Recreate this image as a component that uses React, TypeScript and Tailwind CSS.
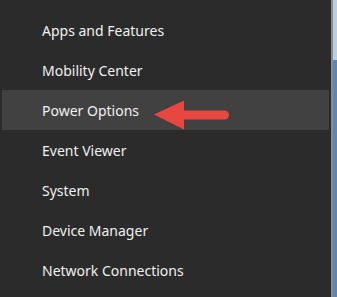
const items = [
  'Apps and Features',
  'Mobility Center',
  'Power Options',
  'Event Viewer',
  'System',
  'Device Manager',
  'Network Connections',
]

function Arrow() {
  return (
    <svg width="76" height="30" viewBox="0 0 76 30" className="absolute left-[152px] top-[10px]">
      <path d="M0 14.5 L30 0.5 L30 10.5 L70.5 10.5 A4.5 4.5 0 0 1 70.5 19.5 L30 19.5 L30 29.5 Z" fill="#e8473f" />
    </svg>
  )
}

export default function App() {
  return (
    <div className="flex w-[337px] h-[297px] bg-[#2b2b2b] overflow-hidden" style={{ fontFamily: '"Noto Sans", "Open Sans", sans-serif' }}>
      <div className="w-[331px] pt-[10px] pl-[2px] pr-[2px]">
        {items.map((item, i) => (
          <div
            key={item}
            className={`relative flex items-center h-[40px] pl-[40px] text-[14px] text-[#f0f0f0] ${i === 2 ? 'bg-[#414141]' : ''}`}
          >
            <span className="leading-none pt-[2px]">{item}</span>
            {i === 2 && <Arrow />}
          </div>
        ))}
      </div>
      <div className="w-[2px] bg-[#8c8c8c]" />
      <div className="flex-1 flex flex-col">
        <div className="h-[60px] bg-[#b9cfe6]" />
        <div className="flex-1 bg-[#5b87b8]" />
      </div>
    </div>
  )
}
